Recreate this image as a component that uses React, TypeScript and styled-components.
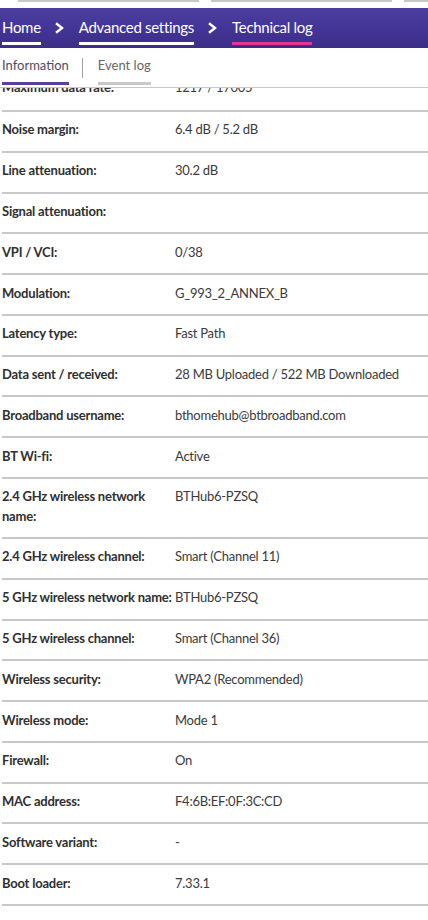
import React from "react";
import styled, { createGlobalStyle } from "styled-components";

const GlobalStyle = createGlobalStyle`
  html, body { margin: 0; padding: 0; background: #ffffff; }
  body { font-family: Lato, "Noto Sans", "Liberation Sans", sans-serif; color: #333; }
  * { box-sizing: border-box; }
`;

const Page = styled.div`
  width: 428px;
  height: 920px;
  overflow: hidden;
  display: flex;
  flex-direction: column;
  background: #fff;
`;

const TopStrip = styled.div`
  height: 8px;
  display: flex;
  gap: 12px;
  padding-left: 18px;
  overflow: hidden;
  flex-shrink: 0;
`;

const FieldEdge = styled.div`
  width: 181px;
  height: 2px;
  flex-shrink: 0;
  background: #c8c8c8;
`;

const Breadcrumbs = styled.nav`
  height: 40px;
  flex-shrink: 0;
  display: flex;
  align-items: flex-end;
  padding: 0 0 3px 2px;
  background: linear-gradient(180deg, #4c3f9c 0%, #44369a 45%, #3c2d85 100%);
`;

const Crumb = styled.span<{ $active?: boolean }>`
  font-size: 15px;
  letter-spacing: -0.3px;
  line-height: 20px;
  color: #fff;
  padding-bottom: 5px;
  border-bottom: 3px solid ${(p) => (p.$active ? "#e8348f" : "#ffffff")};
  white-space: nowrap;
`;

const Chevron = styled.svg`
  width: 10px;
  height: 12px;
  margin: 0 15px 11px 13px;
  flex-shrink: 0;
`;

const Tabs = styled.div`
  height: 40px;
  flex-shrink: 0;
  display: flex;
  align-items: flex-end;
  padding-left: 2px;
  border-bottom: 1px solid #c8c8c8;
`;

const Tab = styled.span<{ $active?: boolean }>`
  font-size: 13px;
  line-height: 16px;
  color: ${(p) => (p.$active ? "#4f4a66" : "#666")};
  padding-bottom: 9px;
  margin-bottom: 2px;
  border-bottom: 3px solid ${(p) => (p.$active ? "#5a3f9e" : "#c8c8c8")};
  white-space: nowrap;
`;

const TabDivider = styled.span`
  width: 1px;
  height: 20px;
  background: #a0a0a0;
  margin: 0 15px 9px 13px;
`;

const List = styled.div`
  display: flex;
  flex-direction: column;
  padding-left: 2px;
`;

const Row = styled.div<{ $clipped?: boolean }>`
  display: grid;
  grid-template-columns: 173px 1fr;
  align-items: start;
  padding: 8.4px 0 11.2px;
  border-bottom: 2px solid #c8c8c8;
  font-size: 13px;
  line-height: 19.2px;
  ${(p) =>
    p.$clipped &&
    `
    height: 24px;
    padding-top: 0;
    align-content: end;
    overflow: hidden;
    padding-bottom: 13px;
  `}
`;

const Label = styled.div`
  font-weight: 700;
  letter-spacing: -0.22px;
  color: #2f2f2f;
`;

const Value = styled.div`
  color: #3a3a3a;
  letter-spacing: -0.25px;
`;

const rows: [string, string][] = [
  ["Noise margin:", "6.4 dB / 5.2 dB"],
  ["Line attenuation:", "30.2 dB"],
  ["Signal attenuation:", ""],
  ["VPI / VCI:", "0/38"],
  ["Modulation:", "G_993_2_ANNEX_B"],
  ["Latency type:", "Fast Path"],
  ["Data sent / received:", "28 MB Uploaded / 522 MB Downloaded"],
  ["Broadband username:", "bthomehub@btbroadband.com"],
  ["BT Wi-fi:", "Active"],
  ["2.4 GHz wireless network name:", "BTHub6-PZSQ"],
  ["2.4 GHz wireless channel:", "Smart (Channel 11)"],
  ["5 GHz wireless network name:", "BTHub6-PZSQ"],
  ["5 GHz wireless channel:", "Smart (Channel 36)"],
  ["Wireless security:", "WPA2 (Recommended)"],
  ["Wireless mode:", "Mode 1"],
  ["Firewall:", "On"],
  ["MAC address:", "F4:6B:EF:0F:3C:CD"],
  ["Software variant:", "-"],
  ["Boot loader:", "7.33.1"],
];

const ChevronIcon = () => (
  <Chevron viewBox="0 0 10 12" fill="none">
    <path d="M2 1.2 L8 6 L2 10.8" stroke="#fff" strokeWidth="2.4" strokeLinejoin="miter" />
  </Chevron>
);

export default function App() {
  return (
    <Page>
      <GlobalStyle />
      <TopStrip>
        <FieldEdge />
        <FieldEdge />
        <FieldEdge />
      </TopStrip>
      <Breadcrumbs>
        <Crumb>Home</Crumb>
        <ChevronIcon />
        <Crumb>Advanced settings</Crumb>
        <ChevronIcon />
        <Crumb $active>Technical log</Crumb>
      </Breadcrumbs>
      <Tabs>
        <Tab $active>Information</Tab>
        <TabDivider />
        <Tab>Event log</Tab>
      </Tabs>
      <List>
        <Row $clipped>
          <Label>Maximum data rate:</Label>
          <Value>1217 / 17005</Value>
        </Row>
        {rows.map(([label, value]) => (
          <Row key={label}>
            <Label>{label}</Label>
            <Value>{value}</Value>
          </Row>
        ))}
      </List>
    </Page>
  );
}
